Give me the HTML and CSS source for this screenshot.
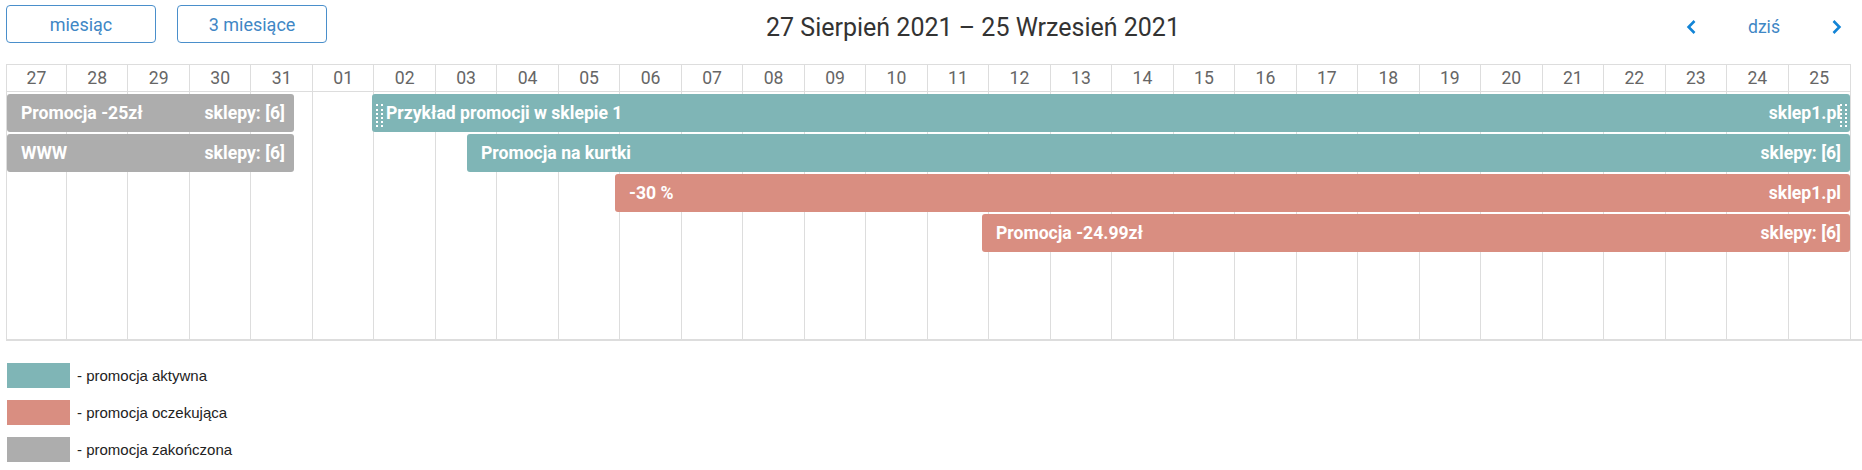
FILE: index.html
```html
<!DOCTYPE html>
<html lang="pl">
<head>
    <meta charset="UTF-8">
    <meta name="viewport" content="width=device-width, initial-scale=1.0">
    <title>Kalendarz promocji</title>
    <link rel="stylesheet" href="styles.css">
</head>
<body>

    <div class="toolbar">
        <div class="views">
            <button class="view-btn">miesiąc</button>
            <button class="view-btn">3 miesiące</button>
        </div>
        <h2 class="range-title">27 Sierpień 2021 – 25 Wrzesień 2021</h2>
        <div class="nav">
            <button class="nav-btn" aria-label="poprzedni">
                <svg width="10" height="14" viewBox="0 0 10 14"><polyline points="8.5,1 2.6,7 8.5,13" fill="none" stroke="currentColor" stroke-width="2.6"/></svg>
            </button>
            <button class="nav-btn today">dziś</button>
            <button class="nav-btn" aria-label="następny">
                <svg width="10" height="14" viewBox="0 0 10 14"><polyline points="1.5,1 7.4,7 1.5,13" fill="none" stroke="currentColor" stroke-width="2.6"/></svg>
            </button>
        </div>
    </div>

    <!-- Timeline -->
    <div class="calendar">
        <div class="timeline">
            <div class="days">
                <div class="day">27</div><div class="day">28</div><div class="day">29</div><div class="day">30</div><div class="day">31</div>
                <div class="day">01</div><div class="day">02</div><div class="day">03</div><div class="day">04</div><div class="day">05</div>
                <div class="day">06</div><div class="day">07</div><div class="day">08</div><div class="day">09</div><div class="day">10</div>
                <div class="day">11</div><div class="day">12</div><div class="day">13</div><div class="day">14</div><div class="day">15</div>
                <div class="day">16</div><div class="day">17</div><div class="day">18</div><div class="day">19</div><div class="day">20</div>
                <div class="day">21</div><div class="day">22</div><div class="day">23</div><div class="day">24</div><div class="day">25</div>
            </div>

            <div class="lanes">
                <div class="cols">
                    <div></div><div></div><div></div><div></div><div></div><div></div><div></div><div></div><div></div><div></div>
                    <div></div><div></div><div></div><div></div><div></div><div></div><div></div><div></div><div></div><div></div>
                    <div></div><div></div><div></div><div></div><div></div><div></div><div></div><div></div><div></div><div></div>
                </div>

                <div class="lane">
                    <div class="event ended" style="left:0;width:287px">
                        <span>Promocja -25zł</span>
                        <span>sklepy: [6]</span>
                    </div>
                    <div class="event active" style="left:365px;right:0">
                        <span class="resizer start"></span>
                        <span>Przykład promocji w sklepie 1</span>
                        <span>sklep1.pl</span>
                        <span class="resizer end"></span>
                    </div>
                </div>
                <div class="lane">
                    <div class="event ended" style="left:0;width:287px">
                        <span>WWW</span>
                        <span>sklepy: [6]</span>
                    </div>
                    <div class="event active" style="left:460px;right:0">
                        <span>Promocja na kurtki</span>
                        <span>sklepy: [6]</span>
                    </div>
                </div>
                <div class="lane">
                    <div class="event pending" style="left:608px;right:0">
                        <span>-30 %</span>
                        <span>sklep1.pl</span>
                    </div>
                </div>
                <div class="lane">
                    <div class="event pending" style="left:975px;right:0">
                        <span>Promocja -24.99zł</span>
                        <span>sklepy: [6]</span>
                    </div>
                </div>
            </div>
        </div>
    </div>

    <!-- Legend -->
    <div class="legend">
        <div class="legend-item"><span class="swatch active"></span>- promocja aktywna</div>
        <div class="legend-item"><span class="swatch pending"></span>- promocja oczekująca</div>
        <div class="legend-item"><span class="swatch ended"></span>- promocja zakończona</div>
    </div>

</body>
</html>
```

FILE: styles.css
```css
body {
    margin: 0;
    font-family: Roboto, "Noto Sans", sans-serif;
    background: #fff;
}

.toolbar {
    display: flex;
    justify-content: space-between;
    align-items: center;
    height: 38px;
    padding: 5px 11px 0 6px;
}

.views {
    display: flex;
    gap: 21px;
}

.view-btn {
    width: 150px;
    height: 38px;
    box-sizing: border-box;
    padding: 0;
    border: 1px solid #4a8fcb;
    border-radius: 4px;
    background: #fff;
    color: #3f87c5;
    font-family: Roboto, sans-serif;
    font-size: 18px;
    cursor: pointer;
}

.range-title {
    margin: 0;
    padding-top: 7px;
    font-size: 25px;
    font-weight: 400;
    color: #333;
}

.nav {
    display: flex;
    justify-content: flex-end;
    align-items: center;
    gap: 28px;
    min-width: 232px;
    margin-top: 5px;
}

.nav-btn {
    display: flex;
    align-items: center;
    justify-content: center;
    width: 28px;
    height: 30px;
    padding: 0;
    border: 0;
    background: none;
    color: #1284d6;
    cursor: pointer;
}

.nav-btn.today {
    width: 62px;
    color: #3f87c5;
    font-family: Roboto, sans-serif;
    font-size: 17.6px;
}

/* Timeline */
.calendar {
    margin: 21px 0 0 6px;
    border-bottom: 2px solid #ddd;
}

.timeline {
    margin-right: 11px;
    border: 1px solid #ddd;
    border-bottom: 0;
}

.days,
.cols {
    display: grid;
    grid-template-columns: 60px repeat(29, 1fr);
}

.days {
    border-bottom: 1px solid #ddd;
}

.day {
    height: 26px;
    line-height: 26px;
    text-align: center;
    font-size: 17.6px;
    color: #666;
    border-right: 1px solid #ddd;
}

.day:last-child {
    border-right: 0;
}

.lanes {
    position: relative;
    height: 247px;
    padding-top: 2px;
    box-sizing: border-box;
}

.cols {
    position: absolute;
    inset: 0;
}

.cols div {
    border-right: 1px solid #ddd;
}

.cols div:last-child {
    border-right: 0;
}

.lane {
    position: relative;
    height: 38px;
    margin-bottom: 2px;
}

.event {
    position: absolute;
    top: 0;
    bottom: 0;
    display: flex;
    justify-content: space-between;
    align-items: center;
    box-sizing: border-box;
    padding: 0 9px 0 14px;
    border-radius: 3px;
    color: #fff;
    font-size: 17.6px;
    font-weight: 700;
    white-space: nowrap;
    overflow: hidden;
}

.resizer {
    position: absolute;
    top: 10px;
    width: 3px;
    height: 23px;
    border-left: 2px dotted #fff;
    border-right: 2px dotted #fff;
}

.resizer.start {
    left: 4px;
}

.resizer.end {
    right: 3px;
}

.active {
    background-color: #7fb5b6;
}

.pending {
    background-color: #d98e81;
}

.ended {
    background-color: #adadad;
}

/* Legend */
.legend {
    margin: 22px 0 0 7px;
    font-family: "Liberation Sans", Arial, sans-serif;
    font-size: 15px;
    color: #222;
}

.legend-item {
    display: flex;
    align-items: center;
    gap: 7px;
    margin-bottom: 12px;
}

.swatch {
    width: 63px;
    height: 25px;
}
```
